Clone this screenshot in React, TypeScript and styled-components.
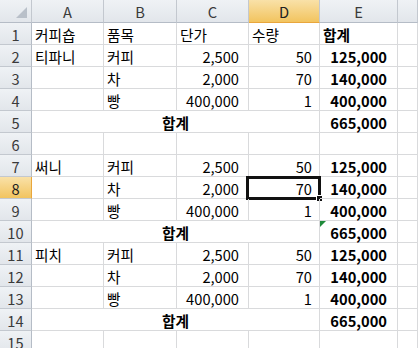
import React from "react";
import styled, { createGlobalStyle, css } from "styled-components";

const GlobalStyle = createGlobalStyle`
  html, body { margin: 0; padding: 0; background: #ffffff; overflow: hidden; }
  body { font-family: "Noto Sans CJK KR", "Noto Sans", sans-serif; }
`;

const FONT = `"Noto Sans CJK KR", "Noto Sans", sans-serif`;
const GRID = "#d9dadc";
const HEAD_LINE = "#c3c8cf";

const Sheet = styled.div`
  display: grid;
  grid-template-columns: 32px 72px 73px 72px 71px 78px 1fr;
  grid-template-rows: 23px repeat(15, 22px);
  width: 418px;
  height: 348px;
  overflow: hidden;
  font-family: ${FONT};
  font-size: 14.67px;
  color: #000;
`;

const headBg = css`
  background: linear-gradient(#eff2f5, #e2e6eb);
  color: #3a3a3a;
`;

const selBg = css`
  background: linear-gradient(#f9e1a8, #f2c45f);
  color: #202020;
`;

const Corner = styled.div`
  ${headBg};
  box-sizing: border-box;
  border-right: 1px solid ${HEAD_LINE};
  border-bottom: 1px solid #b5bcc6;
  display: flex;
  align-items: flex-end;
  justify-content: flex-end;
  padding: 0 4px 4px 0;
`;

const ColHeader = styled.div<{ $selected?: boolean }>`
  ${(p) => (p.$selected ? selBg : headBg)};
  box-sizing: border-box;
  border-right: 1px solid ${HEAD_LINE};
  border-bottom: 1px solid ${(p) => (p.$selected ? "#e9a63c" : "#b5bcc6")};
  display: flex;
  align-items: center;
  justify-content: center;
  line-height: 22px;
  padding-top: 1px;
`;

const RowHeader = styled.div<{ $selected?: boolean }>`
  ${(p) => (p.$selected ? selBg : headBg)};
  box-sizing: border-box;
  border-right: 1px solid ${(p) => (p.$selected ? "#e9a63c" : "#b5bcc6")};
  border-bottom: 1px solid ${HEAD_LINE};
  display: flex;
  align-items: center;
  justify-content: center;
  padding-top: 1px;
`;

const Cell = styled.div<{ $align?: "left" | "right" | "center"; $bold?: boolean; $pr?: number; $span?: number }>`
  position: relative;
  box-sizing: border-box;
  border-right: 1px solid ${GRID};
  border-bottom: 1px solid ${GRID};
  grid-column: ${(p) => (p.$span ? `span ${p.$span}` : "auto")};
  display: flex;
  align-items: center;
  justify-content: ${(p) =>
    p.$align === "right" ? "flex-end" : p.$align === "center" ? "center" : "flex-start"};
  padding: 1px ${(p) => p.$pr ?? 3}px 0 3px;
  font-weight: ${(p) => (p.$bold ? 700 : 400)};
  white-space: nowrap;
  overflow: visible;
`;

const SelectionBox = styled.div`
  position: absolute;
  left: -3px;
  top: -1px;
  width: 75px;
  height: 24px;
  box-sizing: border-box;
  border: 3px solid #111;
  pointer-events: none;
`;

const FillHandle = styled.div`
  position: absolute;
  right: -5px;
  bottom: -5px;
  width: 7px;
  height: 7px;
  background: #111;
  box-sizing: border-box;
  border: 1px solid #fff;
`;

const ErrorMark = styled.div`
  position: absolute;
  left: 0;
  top: 0;
  width: 0;
  height: 0;
  border-top: 6px solid #1f8a3a;
  border-right: 6px solid transparent;
`;

type Row = {
  a?: string;
  b?: string;
  c?: string;
  d?: string;
  e?: string;
  merged?: boolean;
};

const rows: Row[] = [
  { a: "커피숍", b: "품목", c: "단가", d: "수량", e: "합계" },
  { a: "티파니", b: "커피", c: "2,500", d: "50", e: "125,000" },
  { b: "차", c: "2,000", d: "70", e: "140,000" },
  { b: "빵", c: "400,000", d: "1", e: "400,000" },
  { merged: true, e: "665,000" },
  {},
  { a: "써니", b: "커피", c: "2,500", d: "50", e: "125,000" },
  { b: "차", c: "2,000", d: "70", e: "140,000" },
  { b: "빵", c: "400,000", d: "1", e: "400,000" },
  { merged: true, e: "665,000" },
  { a: "피치", b: "커피", c: "2,500", d: "50", e: "125,000" },
  { b: "차", c: "2,000", d: "70", e: "140,000" },
  { b: "빵", c: "400,000", d: "1", e: "400,000" },
  { merged: true, e: "665,000" },
  {},
];

const columns = ["A", "B", "C", "D", "E", ""];

export default function App() {
  return (
    <>
      <GlobalStyle />
      <Sheet>
        <Corner>
          <svg width="11" height="11" viewBox="0 0 11 11">
            <polygon points="11,0 11,11 0,11" fill="#b9c0c9" />
          </svg>
        </Corner>
        {columns.map((c, i) => (
          <ColHeader key={i} $selected={c === "D"}>
            {c}
          </ColHeader>
        ))}
        {rows.map((r, i) => {
          const n = i + 1;
          const isHeader = n === 1;
          return (
            <React.Fragment key={n}>
              <RowHeader $selected={n === 8}>{n}</RowHeader>
              {r.merged ? (
                <Cell $span={4} $align="center" $bold>
                  합계
                </Cell>
              ) : (
                <>
                  <Cell>{r.a}</Cell>
                  <Cell>{r.b}</Cell>
                  <Cell $align={isHeader ? "left" : "right"} $pr={9}>
                    {r.c}
                  </Cell>
                  <Cell $align={isHeader ? "left" : "right"} $pr={7}>
                    {r.d}
                    {n === 8 && (
                      <SelectionBox>
                        <FillHandle />
                      </SelectionBox>
                    )}
                  </Cell>
                </>
              )}
              <Cell $align={isHeader ? "left" : "right"} $bold={!!r.e} $pr={10}>
                {n === 10 && <ErrorMark />}
                {r.e}
              </Cell>
              <Cell />
            </React.Fragment>
          );
        })}
      </Sheet>
    </>
  );
}
